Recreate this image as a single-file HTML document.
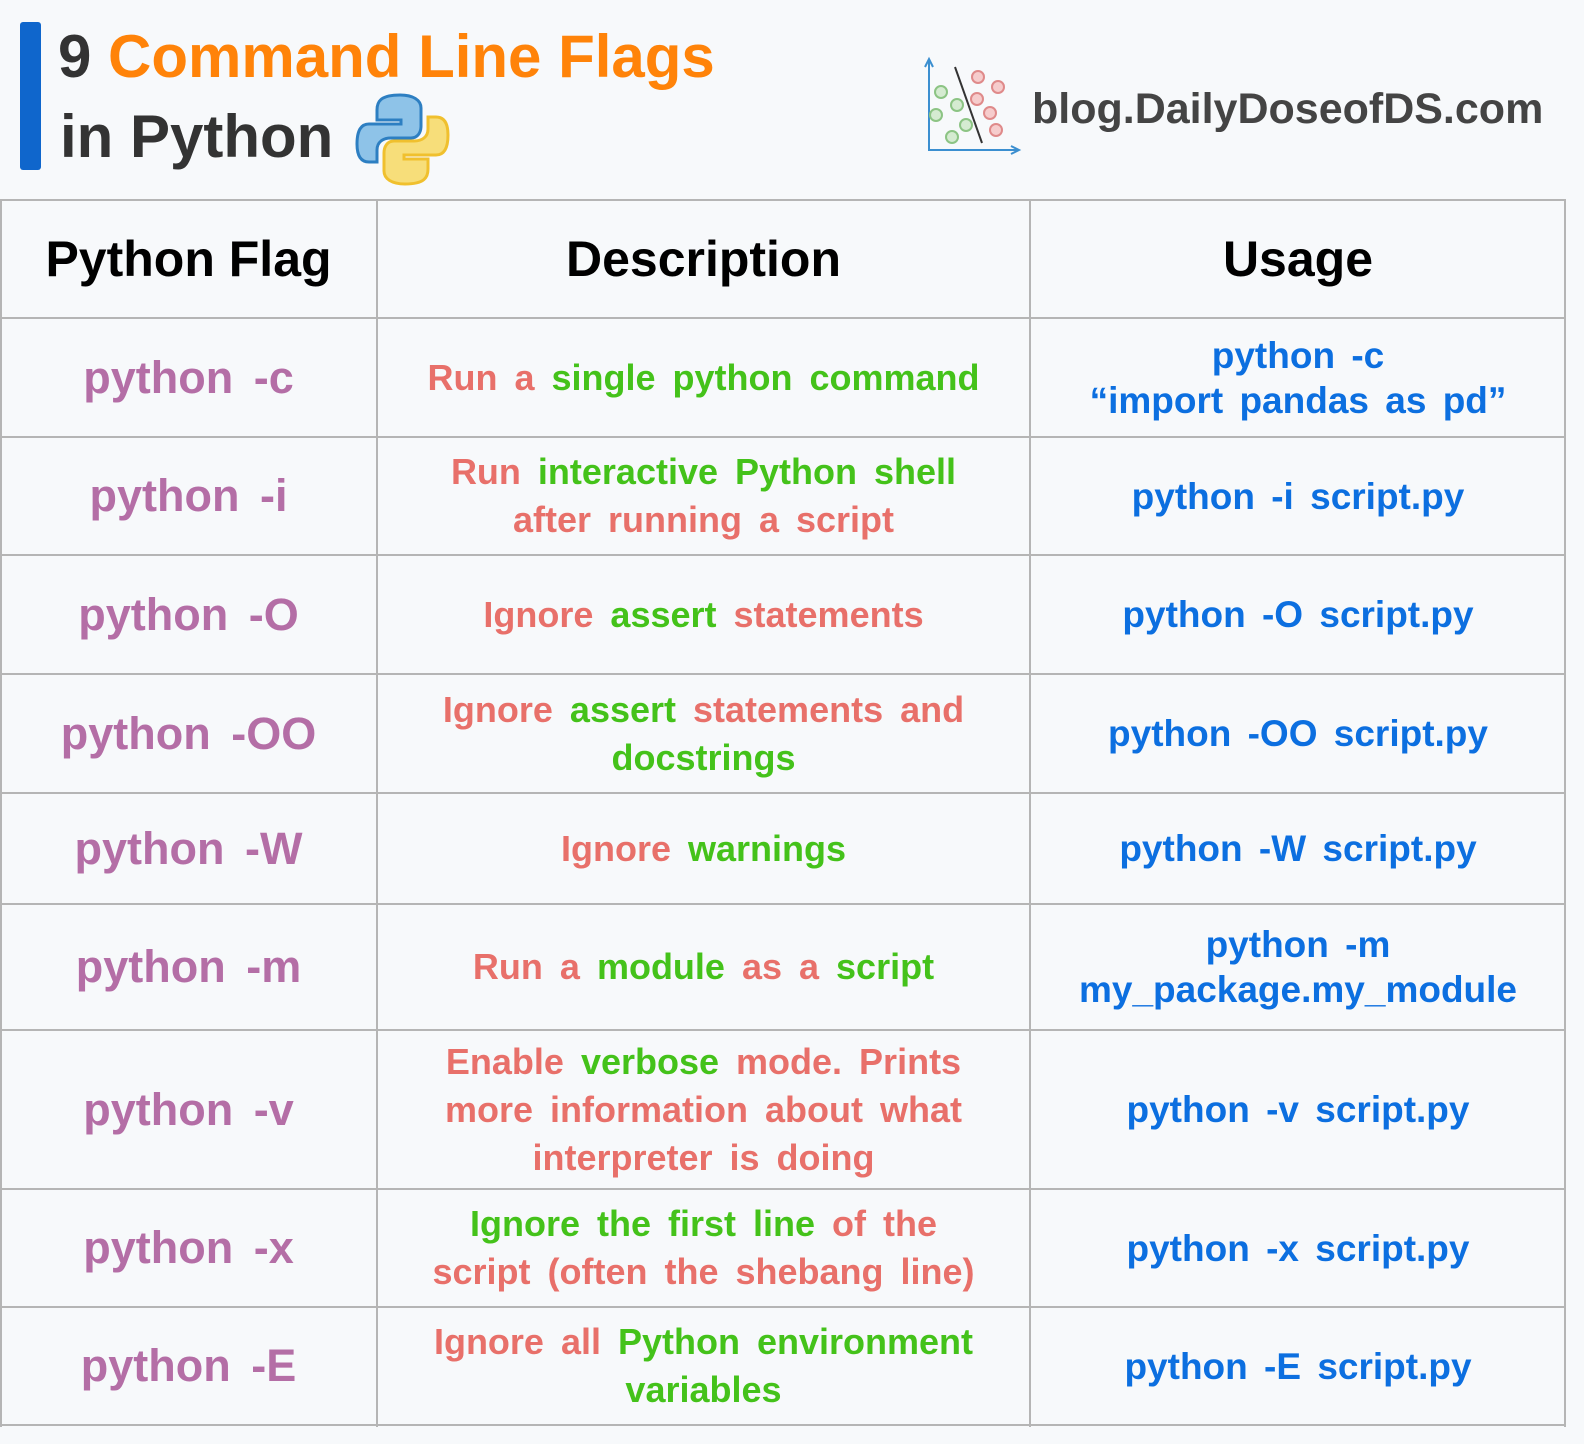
<!DOCTYPE html>
<html><head><meta charset="utf-8"><style>
*{margin:0;padding:0;box-sizing:border-box}
body{width:1584px;height:1444px;background:#f7f9fb;font-family:"Liberation Sans",sans-serif;font-weight:bold;position:relative;overflow:hidden}
.bar{position:absolute;left:20px;top:22px;width:21px;height:148px;background:#0f66cc;border-radius:3px}
.t1{position:absolute;left:58px;top:22px;font-size:60px;color:#333;white-space:nowrap}
.t1 span{color:#ff8309}
.t2{position:absolute;left:60px;top:102px;font-size:60px;color:#333}
.site{position:absolute;left:1032px;top:85px;font-size:43px;color:#444}
.h{position:absolute;height:2px;background:#b5b5b5;left:0;width:1566px}
.v{position:absolute;width:2px;background:#b5b5b5;top:199px;height:1228px}
.c{position:absolute;display:flex;align-items:center;justify-content:center;text-align:center}
.c0{left:0;width:377px}.c1{left:377px;width:653px}.c2{left:1030px;width:536px}
.hd{font-size:50px;color:#000}
.f{font-size:45px;color:#b46ea6;word-spacing:8px}
.d{font-size:36px;color:#e8706a;word-spacing:7px;line-height:48px}
.g{color:#44c21a}
.u{font-size:37px;color:#0c6fe0;line-height:45px;word-spacing:6px}
</style></head><body>
<div class="bar"></div>
<div class="t1">9 <span>Command Line Flags</span></div>
<div class="t2">in Python</div>
<svg style="position:absolute;left:355px;top:92px" width="95" height="95" viewBox="0 0 95 95">
<path d="M45 3 C25 3 22 10 22 18 V28 H46 V32 H14 C4 32 2 42 2 52 C2 64 6 70 14 70 H22 V58 C22 50 28 46 36 46 H56 C63 46 66 40 66 34 V16 C66 8 58 3 45 3Z" fill="#8ec3e8" stroke="#2d7fc2" stroke-width="3"/>
<path d="M50 92 C70 92 73 85 73 77 V67 H49 V63 H81 C91 63 93 53 93 43 C93 31 89 25 81 25 H73 V37 C73 45 67 49 59 49 H39 C32 49 29 55 29 61 V79 C29 87 37 92 50 92Z" fill="#f7de7a" stroke="#f0c02e" stroke-width="3"/>
</svg>
<svg style="position:absolute;left:922px;top:55px" width="100" height="100" viewBox="0 0 100 100">
<path d="M7 6 V95 H95" fill="none" stroke="#3b8fd0" stroke-width="2"/>
<path d="M3 12 L7 4 L11 12 M89 91 L97 95 L89 99" fill="none" stroke="#3b8fd0" stroke-width="2"/>
<line x1="33" y1="12" x2="60" y2="88" stroke="#333" stroke-width="2"/>
<g fill="#d5ebd1" stroke="#8cc484" stroke-width="2"><circle cx="19" cy="37" r="6"/><circle cx="35" cy="50" r="6"/><circle cx="14" cy="60" r="6"/><circle cx="44" cy="70" r="6"/><circle cx="30" cy="82" r="6"/></g>
<g fill="#f6cccc" stroke="#df8a8a" stroke-width="2"><circle cx="56" cy="22" r="6"/><circle cx="76" cy="32" r="6"/><circle cx="55" cy="44" r="6"/><circle cx="68" cy="58" r="6"/><circle cx="74" cy="75" r="6"/></g>
</svg>
<div class="site">blog.DailyDoseofDS.com</div>

<div class="h" style="top:199px"></div><div class="h" style="top:317px"></div><div class="h" style="top:436px"></div><div class="h" style="top:554px"></div><div class="h" style="top:673px"></div><div class="h" style="top:792px"></div><div class="h" style="top:903px"></div><div class="h" style="top:1029px"></div><div class="h" style="top:1188px"></div><div class="h" style="top:1306px"></div><div class="h" style="top:1424px"></div>
<div class="v" style="left:0"></div><div class="v" style="left:376px"></div><div class="v" style="left:1029px"></div><div class="v" style="left:1564px"></div>

<div class="c c0 hd" style="top:200px;height:118px">Python Flag</div>
<div class="c c1 hd" style="top:200px;height:118px">Description</div>
<div class="c c2 hd" style="top:200px;height:118px">Usage</div>

<div class="c c0 f" style="top:318px;height:119px">python -c</div>
<div class="c c1 d" style="top:318px;height:119px"><div>Run a <span class="g">single python command</span></div></div>
<div class="c c2 u" style="top:318px;height:119px"><div>python -c<br>“import pandas as pd”</div></div>

<div class="c c0 f" style="top:437px;height:118px">python -i</div>
<div class="c c1 d" style="top:437px;height:118px"><div>Run <span class="g">interactive Python shell</span><br>after running a script</div></div>
<div class="c c2 u" style="top:437px;height:118px">python -i script.py</div>

<div class="c c0 f" style="top:555px;height:119px">python -O</div>
<div class="c c1 d" style="top:555px;height:119px"><div>Ignore <span class="g">assert</span> statements</div></div>
<div class="c c2 u" style="top:555px;height:119px">python -O script.py</div>

<div class="c c0 f" style="top:674px;height:119px">python -OO</div>
<div class="c c1 d" style="top:674px;height:119px"><div>Ignore <span class="g">assert</span> statements and<br><span class="g">docstrings</span></div></div>
<div class="c c2 u" style="top:674px;height:119px">python -OO script.py</div>

<div class="c c0 f" style="top:793px;height:111px">python -W</div>
<div class="c c1 d" style="top:793px;height:111px"><div>Ignore <span class="g">warnings</span></div></div>
<div class="c c2 u" style="top:793px;height:111px">python -W script.py</div>

<div class="c c0 f" style="top:904px;height:126px">python -m</div>
<div class="c c1 d" style="top:904px;height:126px"><div>Run a <span class="g">module</span> as a <span class="g">script</span></div></div>
<div class="c c2 u" style="top:904px;height:126px"><div>python -m<br>my_package.my_module</div></div>

<div class="c c0 f" style="top:1030px;height:159px">python -v</div>
<div class="c c1 d" style="top:1030px;height:159px"><div>Enable <span class="g">verbose</span> mode. Prints<br>more information about what<br>interpreter is doing</div></div>
<div class="c c2 u" style="top:1030px;height:159px">python -v script.py</div>

<div class="c c0 f" style="top:1189px;height:118px">python -x</div>
<div class="c c1 d" style="top:1189px;height:118px"><div><span class="g">Ignore the first line</span> of the<br>script (often the shebang line)</div></div>
<div class="c c2 u" style="top:1189px;height:118px">python -x script.py</div>

<div class="c c0 f" style="top:1307px;height:118px">python -E</div>
<div class="c c1 d" style="top:1307px;height:118px"><div>Ignore all <span class="g">Python environment</span><br><span class="g">variables</span></div></div>
<div class="c c2 u" style="top:1307px;height:118px">python -E script.py</div>
</body></html>
